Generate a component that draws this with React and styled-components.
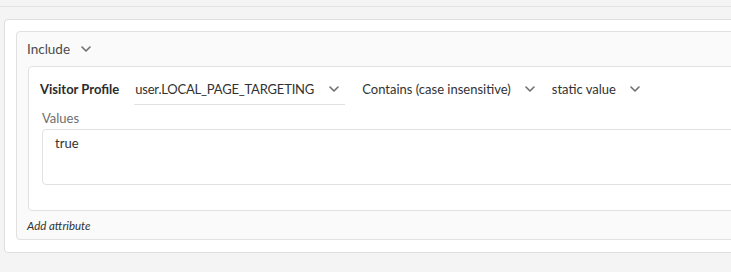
import React from "react";
import styled, { createGlobalStyle } from "styled-components";

const Global = createGlobalStyle`
  html, body { margin: 0; padding: 0; }
  body {
    background: #f4f4f4;
    overflow: hidden;
    font-family: Lato, "Noto Sans", sans-serif;
    color: #323232;
  }
`;

const Page = styled.div`
  width: 731px;
  height: 272px;
  overflow: hidden;
`;

const TopStrip = styled.div`
  height: 6px;
  background: #f4f4f4;
  border-bottom: 1px solid #e3e3e3;
`;

const OuterCard = styled.div`
  margin: 12px -80px 0 4px;
  background: #fff;
  border: 1px solid #dedede;
  border-radius: 4px;
  padding: 11px 11px 12px 11px;
`;

const RuleBox = styled.div`
  background: #fafafa;
  border: 1px solid #e1e1e1;
  border-radius: 4px;
  padding: 0 11px 0 10px;
`;

const RuleHeader = styled.div`
  height: 34px;
  display: flex;
  align-items: center;
  gap: 11px;
  font-size: 13.5px;
  color: #4b4b4b;
`;

const ConditionCard = styled.div`
  background: #fff;
  border: 1px solid #e1e1e1;
  border-radius: 4px;
  margin-left: 1px;
  padding: 6px 11px 25px 11px;
`;

const ConditionRow = styled.div`
  display: flex;
  align-items: center;
  height: 32px;
  gap: 15px;
`;

const AttrName = styled.div`
  font-weight: 700;
  font-size: 13px;
  color: #2c2c2c;
`;

const Dropdown = styled.div`
  display: flex;
  align-items: center;
  justify-content: space-between;
  height: 31px;
  gap: ${(p) => (p.$underline ? "6px" : "14px")};
  font-size: 13px;
  letter-spacing: ${(p) => (p.$underline ? "-0.2px" : "0")};
  color: #323232;
  box-sizing: border-box;
  flex: none;
  width: ${(p) => (p.$width ? `${p.$width}px` : "auto")};
  border-bottom: ${(p) => (p.$underline ? "1px solid #e1e1e1" : "1px solid transparent")};
  padding-left: 1px;
  padding-right: ${(p) => (p.$underline ? "6px" : "0")};
  margin-right: 1px;

  svg { flex: none; }
`;

const ValuesBlock = styled.div`
  padding-left: 2px;
`;

const FieldLabel = styled.div`
  height: 18px;
  line-height: 18px;
  margin-top: 4px;
  font-size: 13px;
  color: #6e6e6e;
`;

const ValueArea = styled.div`
  margin-top: 2px;
  height: 56px;
  box-sizing: border-box;
  border: 1px solid #e1e1e1;
  border-radius: 4px;
  padding: 4px 12px;
  font-size: 13px;
  line-height: 18px;
  color: #323232;
`;

const Footer = styled.div`
  height: 28px;
  display: flex;
  align-items: center;
  font-style: italic;
  font-size: 11.5px;
  color: #323232;
`;

const Chevron = () => (
  <svg width="10" height="6" viewBox="0 0 10 6" fill="none">
    <path d="M1 1 L5 5 L9 1" stroke="#6e6e6e" strokeWidth="1.6" strokeLinecap="round" strokeLinejoin="round" />
  </svg>
);

export default function App() {
  return (
    <Page>
      <Global />
      <TopStrip />
      <OuterCard>
        <RuleBox>
          <RuleHeader>
            <span>Include</span>
            <Chevron />
          </RuleHeader>
          <ConditionCard>
            <ConditionRow>
              <AttrName>Visitor Profile</AttrName>
              <Dropdown $underline $width={211}>
                <span>user.LOCAL_PAGE_TARGETING</span>
                <Chevron />
              </Dropdown>
              <Dropdown>
                <span>Contains (case insensitive)</span>
                <Chevron />
              </Dropdown>
              <Dropdown>
                <span>static value</span>
                <Chevron />
              </Dropdown>
            </ConditionRow>
            <ValuesBlock>
              <FieldLabel>Values</FieldLabel>
              <ValueArea>true</ValueArea>
            </ValuesBlock>
          </ConditionCard>
          <Footer>Add attribute</Footer>
        </RuleBox>
      </OuterCard>
    </Page>
  );
}
